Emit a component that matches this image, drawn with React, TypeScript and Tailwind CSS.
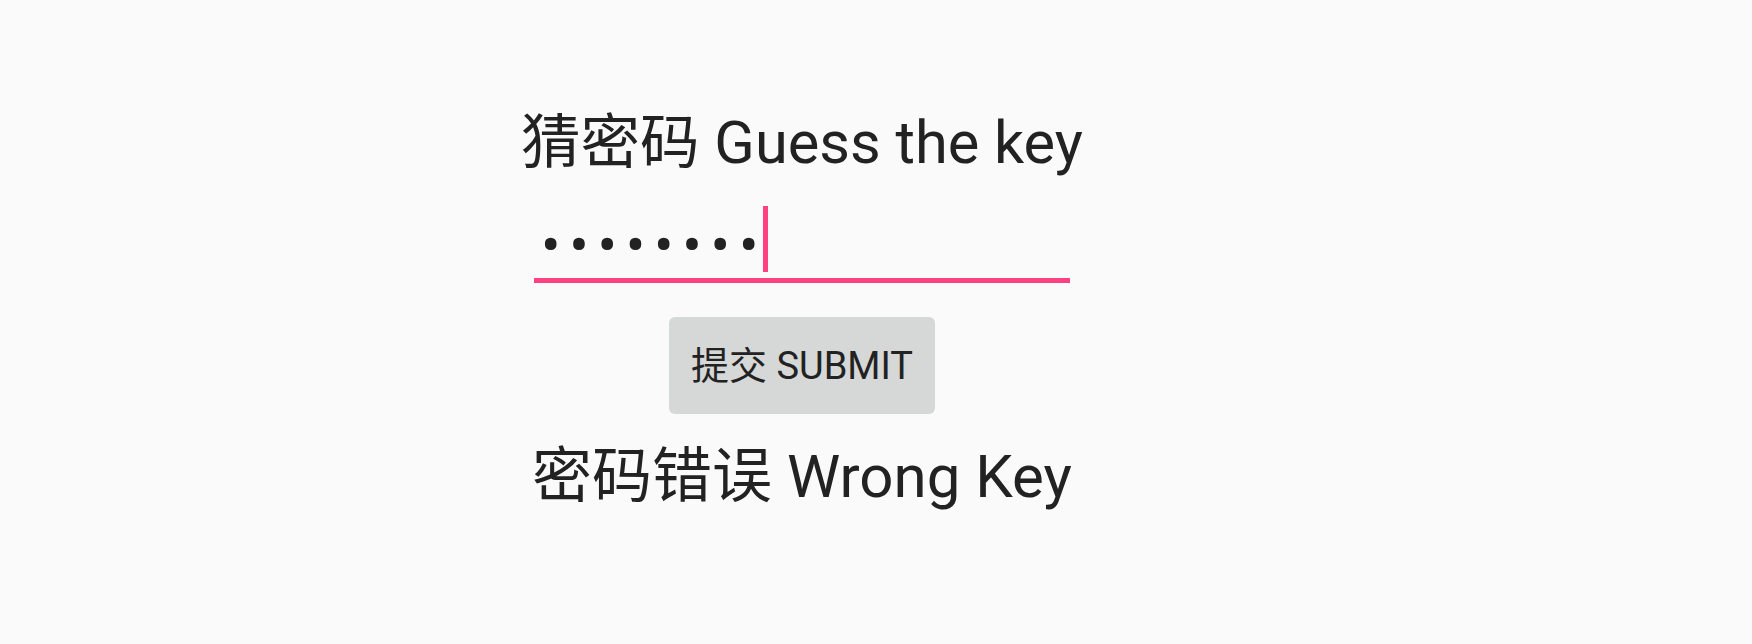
import React from 'react'

const FONT = "font-['Roboto','Noto_Sans_CJK_SC',sans-serif]"

export default function App() {
  return (
    <div className={`min-h-[644px] w-full bg-[#fafafa] text-[#222222] ${FONT}`}>
      <div className="w-[1604px] flex flex-col items-center pt-[108px]">
        {/* Title */}
        <h1 className="text-[59.5px] leading-[70px] font-normal">猜密码 Guess the key</h1>

        {/* Password field */}
        <div className="mt-[28px] w-[536px] border-b-[5px] border-[#ff4081]">
          <div className="h-[72px] flex items-center pl-[7px]">
            <span className="text-[58px] leading-none tracking-[8.7px] pt-[6px]">••••••••</span>
            <span className="self-start -ml-[4px] w-[5px] h-[66px] bg-[#ff4081]" />
          </div>
        </div>

        {/* Submit */}
        <button className="mt-[34px] w-[266px] h-[97px] rounded-[6px] bg-[#d6d7d7] text-[38px] leading-none text-[#222222]">
          提交 SUBMIT
        </button>

        {/* Result */}
        <p className="mt-[28px] text-[60px] leading-[70px]">密码错误 Wrong Key</p>
      </div>
    </div>
  )
}
